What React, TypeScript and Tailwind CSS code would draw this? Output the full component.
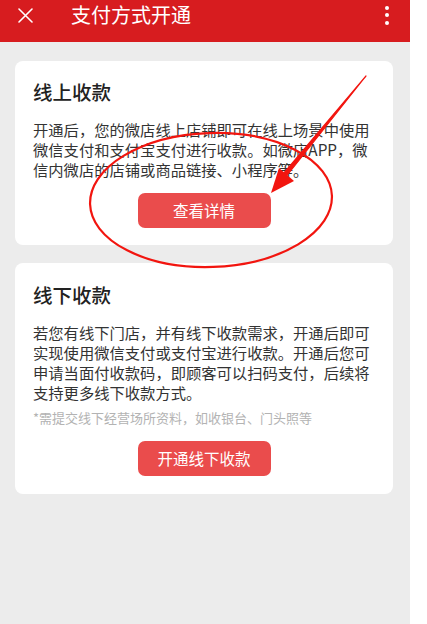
const font = { fontFamily: '"Noto Sans CJK SC", "Noto Sans", sans-serif' };

function Header() {
  return (
    <div className="h-[42px] bg-[#d71c1f] text-white">
      <div className="flex h-[30px] items-center">
        <svg className="ml-[18px]" width="15" height="15" viewBox="0 0 15 15">
          <path d="M1 1 L14 14 M14 1 L1 14" stroke="white" strokeWidth="1.6" strokeLinecap="round" />
        </svg>
        <div className="ml-[38px] text-[20px] leading-[28px]">支付方式开通</div>
        <div className="ml-auto mr-[21px] flex flex-col gap-[3.5px]">
          <span className="block h-[4px] w-[4px] rounded-full bg-white" />
          <span className="block h-[4px] w-[4px] rounded-full bg-white" />
          <span className="block h-[4px] w-[4px] rounded-full bg-white" />
        </div>
      </div>
    </div>
  );
}

function RedButton({ label }: { label: string }) {
  return (
    <div className="flex justify-center">
      <button className="h-[35px] w-[133px] rounded-[7px] bg-[#ea4c4c] text-[15.5px] text-white">
        {label}
      </button>
    </div>
  );
}

export default function App() {
  return (
    <div className="relative flex h-[624px] w-[427px] overflow-hidden bg-white" style={font}>
      <div className="h-full w-[410px] bg-[#ececec]">
        <Header />
        <div className="flex flex-col gap-[18px] pl-[15px] pr-[17px] pt-[19px]">
          <div className="rounded-[8px] bg-white px-[18px] pb-[17px] pt-[17px]">
            <h2 className="text-[19.5px] font-medium leading-[28px] text-[#222]">线上收款</h2>
            <p className="mt-[13px] text-[15.3px] leading-[20px] text-[#333]">
              开通后，您的微店线上店铺即可在线上场景中使用
              <br />
              微信支付和支付宝支付进行收款。如微店APP，微
              <br />
              信内微店的店铺或商品链接、小程序等。
            </p>
            <div className="mt-[14px]">
              <RedButton label="查看详情" />
            </div>
          </div>

          <div className="rounded-[8px] bg-white px-[18px] pb-[18px] pt-[18px]">
            <h2 className="text-[19.5px] font-medium leading-[28px] text-[#222]">线下收款</h2>
            <p className="mt-[13px] text-[15.3px] leading-[20px] text-[#333]">
              若您有线下门店，并有线下收款需求，开通后即可
              <br />
              实现使用微信支付或支付宝进行收款。开通后您可
              <br />
              申请当面付收款码，即顾客可以扫码支付，后续将
              <br />
              支持更多线下收款方式。
            </p>
            <p className="mt-[7px] text-[13px] leading-[18px] text-[#b3b3b3]">
              *需提交线下经营场所资料，如收银台、门头照等
            </p>
            <div className="mt-[14px]">
              <RedButton label="开通线下收款" />
            </div>
          </div>
        </div>
      </div>
      <div className="h-full flex-1 bg-white" />

      <svg className="pointer-events-none absolute left-0 top-0" width="427" height="624" viewBox="0 0 427 624">
        <ellipse cx="211" cy="200" rx="121" ry="67" fill="none" stroke="#f2150f" strokeWidth="2.2" transform="rotate(-2 211 200)" />
        <path d="M366 76 L278 180 L281 183 Z" fill="#f2150f" stroke="#f2150f" strokeWidth="1.2" strokeLinejoin="round" />
        <path d="M271 193 L279 168 L294 181 Z" fill="#f2150f" />
      </svg>
    </div>
  );
}
